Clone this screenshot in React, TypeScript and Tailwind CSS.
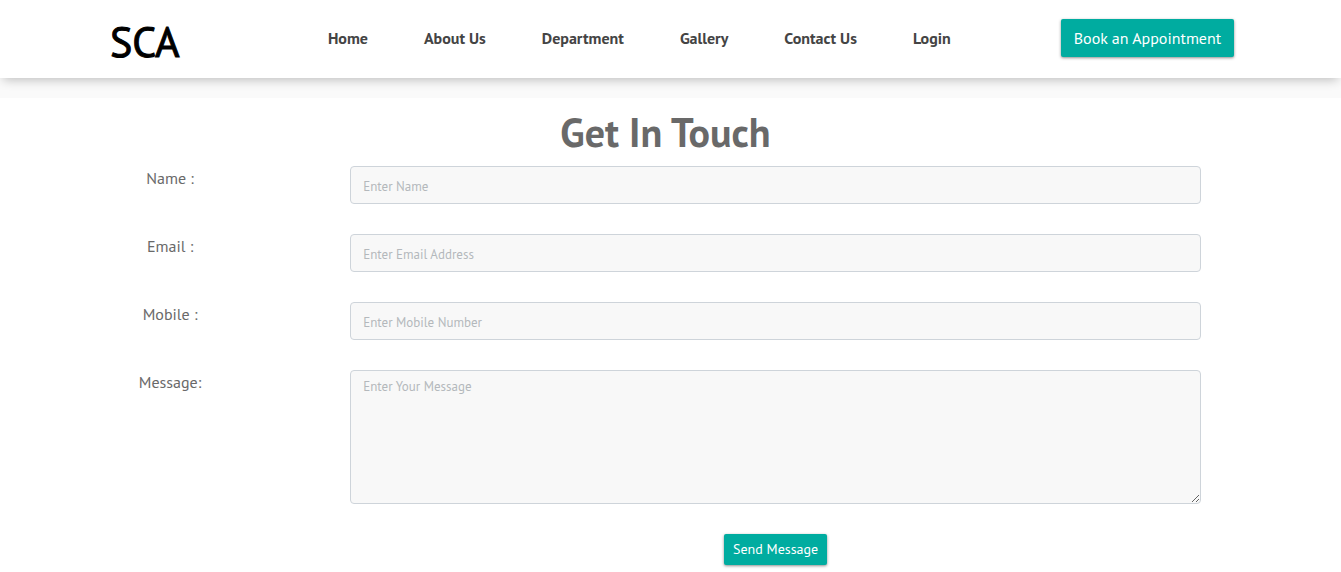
const links = ['Home', 'About Us', 'Department', 'Gallery', 'Contact Us', 'Login'];

const fields = [
  { id: 'name', label: 'Name :', type: 'text', placeholder: 'Enter Name' },
  { id: 'email', label: 'Email :', type: 'email', placeholder: 'Enter Email Address' },
  { id: 'mobile', label: 'Mobile :', type: 'tel', placeholder: 'Enter Mobile Number' },
];

const button = 'rounded-xs bg-[#00aca0] text-white shadow-[0_1px_3px_rgba(0,0,0,0.45)]';
const control =
  'block w-full rounded-sm border border-[#ced4da] bg-[#f8f8f8] px-3 text-[13px] text-[#495057] placeholder:text-[#b4b8bc]';
const row = 'grid grid-cols-10';
const labelStyle = 'text-center text-base text-[#696969]';

function Header() {
  return (
    <header className="relative bg-white shadow-[0_5px_10px_-3px_rgba(0,0,0,0.24)]">
      <div className="mx-auto flex h-[78px] w-full max-w-[1127px] items-center justify-between pb-[2px] pl-[3px]">
        <a href="#home" className="pt-[6px] text-[42px] text-black [-webkit-text-stroke:1px_black]">
          SCA
        </a>
        <nav className="flex gap-14 pl-[38px] text-base font-bold text-[#444]">
          {links.map((link) => (
            <a key={link} href="#">
              {link}
            </a>
          ))}
        </nav>
        <button type="button" className={`${button} h-[38px] w-[173px] text-base`}>
          Book an Appointment
        </button>
      </div>
    </header>
  );
}

function ContactForm() {
  return (
    <form className="flex flex-col gap-[30px]">
      {fields.map((field) => (
        <div key={field.id} className={row}>
          <label htmlFor={field.id} className={labelStyle}>
            {field.label}
          </label>
          <div className="col-span-8 col-start-3 px-[15px]">
            <input
              id={field.id}
              type={field.type}
              placeholder={field.placeholder}
              className={`${control} h-[38px] pt-[2px]`}
            />
          </div>
        </div>
      ))}
      <div className={row}>
        <label htmlFor="message" className={labelStyle}>
          Message:
        </label>
        <div className="col-span-8 col-start-3 px-[15px]">
          <textarea
            id="message"
            placeholder="Enter Your Message"
            className={`${control} h-[134px] resize py-[6px]`}
          />
        </div>
      </div>
      <div className={row}>
        <div className="col-span-8 col-start-3 flex justify-center">
          <button type="submit" className={`${button} h-[31px] w-[103px] pb-px text-sm`}>
            Send Message
          </button>
        </div>
      </div>
    </form>
  );
}

export default function App() {
  return (
    <div className="bg-white font-['PT_Sans',Lato,sans-serif]">
      <Header />
      <div className="h-5 bg-[#fafafa]" />
      <main className="pr-[10px] pb-2">
        <div className="mx-auto w-full max-w-[1101px]">
          <h1 className="pt-[10px] pb-[10px] text-center text-[40px] leading-[48px] font-bold text-[#696969]">
            Get In Touch
          </h1>
          <ContactForm />
        </div>
      </main>
    </div>
  );
}
